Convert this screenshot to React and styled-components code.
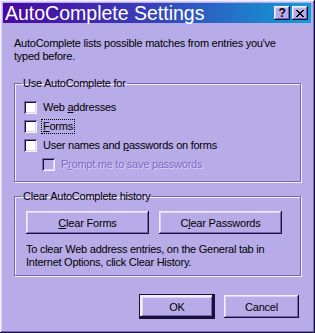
import React from 'react';
import styled, { createGlobalStyle, css } from 'styled-components';

const face = '#b8ace8';
const light = '#dcd4fa';
const hilite = '#f4f0ff';
const shadow = '#7466b8';
const dark = '#16103a';

const GlobalStyle = createGlobalStyle`
  html, body {
    margin: 0;
    padding: 0;
    background: ${face};
  }
  body {
    font-family: "Liberation Sans", Arial, sans-serif;
    font-size: 11px;
    letter-spacing: -0.25px;
    color: #000;
  }
`;

const raised = css`
  box-shadow: inset -1px -1px ${dark}, inset 1px 1px ${hilite},
    inset -2px -2px ${shadow}, inset 2px 2px ${light};
`;

const Window = styled.div`
  width: 315px;
  height: 333px;
  box-sizing: border-box;
  background: ${face};
  display: flex;
  flex-direction: column;
  padding: 3px 4px 0 3px;
  ${raised};
`;

const TitleBar = styled.div`
  height: 20px;
  display: flex;
  align-items: center;
  padding: 0 3px 0 2px;
  background: linear-gradient(90deg, #4a08a0 0%, #3a3cb8 45%, #10a0d4 100%);
`;

const Title = styled.div`
  flex: 1;
  color: #fff;
  font-size: 19.5px;
  letter-spacing: 0;
  line-height: 20px;
  white-space: nowrap;
`;

const CaptionButtons = styled.div`
  display: flex;
  gap: 2px;
`;

const CaptionButton = styled.div`
  width: 16px;
  height: 14px;
  background: ${face};
  display: flex;
  align-items: center;
  justify-content: center;
  font-weight: bold;
  font-size: 12px;
  line-height: 14px;
  ${raised};
`;

const Body = styled.div`
  padding: 14px 10px 0 11px;
  display: flex;
  flex-direction: column;
`;

const Para = styled.p`
  margin: ${p => p.$top || 0}px 0 0;
  line-height: 13px;
  padding: 0 ${p => p.$inset || 0}px;
`;

const Group = styled.fieldset`
  margin: ${p => p.$top}px 0 0;
  padding: 8px 10px ${p => p.$bottom}px 9px;
  border: 1px solid ${shadow};
  box-shadow: inset 1px 1px ${hilite}, 1px 1px ${hilite};
  min-width: 0;
`;

const Legend = styled.legend`
  padding: 0 1px;
  margin-left: -2px;
  line-height: 13px;
`;

const Row = styled.div`
  height: 19px;
  display: flex;
  align-items: center;
  gap: 5px;
  padding-left: ${p => (p.$indent ? 18 : 0)}px;
  color: ${p => (p.$disabled ? '#7a6cc6' : '#000')};
  text-shadow: ${p => (p.$disabled ? `1px 1px ${light}` : 'none')};
`;

const Box = styled.span`
  width: 13px;
  height: 13px;
  flex: none;
  background: ${p => (p.$disabled ? face : '#fff')};
  box-shadow: inset 1px 1px ${shadow}, inset -1px -1px ${hilite},
    inset 2px 2px ${dark}, inset -2px -2px ${light};
`;

const Label = styled.span`
  padding: 0 1px;
  line-height: 13px;
  outline: ${p => (p.$focus ? '1px dotted #000' : 'none')};
`;

const Key = styled.u`
  text-decoration-thickness: 1px;
  text-underline-offset: 1px;
`;

const ButtonRow = styled.div`
  display: flex;
  gap: 10px;
  justify-content: ${p => (p.$end ? 'flex-end' : 'flex-start')};
  margin: ${p => p.$margin || '0'};
`;

const Button = styled.button`
  width: ${p => p.$w}px;
  height: 23px;
  border: none;
  background: ${face};
  font-family: "Liberation Sans", Arial, sans-serif;
  font-size: 11px;
  letter-spacing: -0.2px;
  color: #000;
  padding: 0;
  ${raised};
  ${p => p.$default && css`
    outline: 1px solid ${dark};
    box-shadow: inset -2px -2px ${dark}, inset 2px 2px ${hilite},
      inset -3px -3px ${shadow}, inset 3px 3px ${light};
  `}
`;

const CloseGlyph = () => (
  <svg width="8" height="7" viewBox="0 0 8 7">
    <path d="M0 0h2v1h1v1h2V1h1V0h2v1H7v1H6v1H5v1h1v1h1v1h1v1H6V6H5V5H3v1H2v1H0V6h1V5h1V4h1V3H2V2H1V1H0z" fill="#000" />
  </svg>
);

export default function App() {
  return (
    <>
      <GlobalStyle />
      <Window>
        <TitleBar>
          <Title>AutoComplete Settings</Title>
          <CaptionButtons>
            <CaptionButton>?</CaptionButton>
            <CaptionButton><CloseGlyph /></CaptionButton>
          </CaptionButtons>
        </TitleBar>
        <Body>
          <Para>
            AutoComplete lists possible matches from entries you've<br />
            typed before.
          </Para>
          <Group $top={14} $bottom={7}>
            <Legend>Use AutoComplete for</Legend>
            <Row>
              <Box />
              <Label>Web <Key>a</Key>ddresses</Label>
            </Row>
            <Row>
              <Box />
              <Label $focus><Key>F</Key>orms</Label>
            </Row>
            <Row>
              <Box />
              <Label>User names and <Key>p</Key>asswords on forms</Label>
            </Row>
            <Row $indent $disabled>
              <Box $disabled />
              <Label>P<Key>r</Key>ompt me to save passwords</Label>
            </Row>
          </Group>
          <Group $top={8} $bottom={6}>
            <Legend>Clear AutoComplete history</Legend>
            <ButtonRow $margin="0 0 0 2px">
              <Button $w={123}><Key>C</Key>lear Forms</Button>
              <Button $w={123}>C<Key>l</Key>ear Passwords</Button>
            </ButtonRow>
            <Para $inset={2} $top={9}>
              To clear Web address entries, on the General tab in<br />
              Internet Options, click Clear History.
            </Para>
          </Group>
          <ButtonRow $end $margin="19px 2px 0 0">
            <Button $w={74} $default>OK</Button>
            <Button $w={75}>Cancel</Button>
          </ButtonRow>
        </Body>
      </Window>
    </>
  );
}
